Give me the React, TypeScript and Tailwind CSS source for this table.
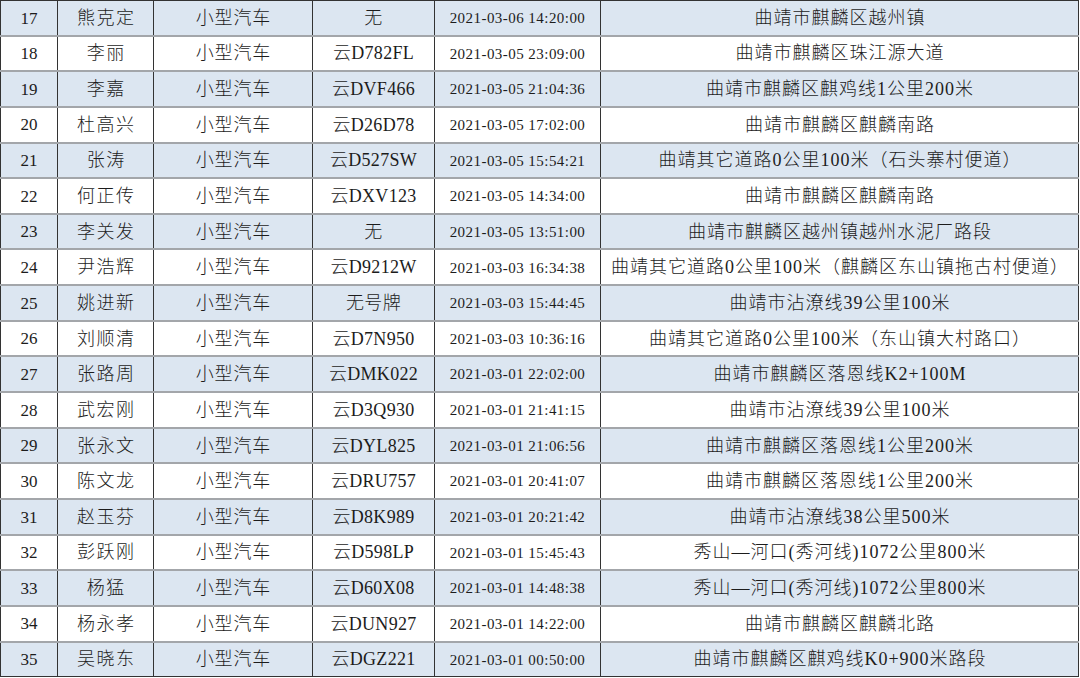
const rows: [string, string, string, string, string, string][] = [
  ['17', '熊克定', '小型汽车', '无', '2021-03-06 14:20:00', '曲靖市麒麟区越州镇'],
  ['18', '李丽', '小型汽车', '云D782FL', '2021-03-05 23:09:00', '曲靖市麒麟区珠江源大道'],
  ['19', '李嘉', '小型汽车', '云DVF466', '2021-03-05 21:04:36', '曲靖市麒麟区麒鸡线1公里200米'],
  ['20', '杜高兴', '小型汽车', '云D26D78', '2021-03-05 17:02:00', '曲靖市麒麟区麒麟南路'],
  ['21', '张涛', '小型汽车', '云D527SW', '2021-03-05 15:54:21', '曲靖其它道路0公里100米（石头寨村便道）'],
  ['22', '何正传', '小型汽车', '云DXV123', '2021-03-05 14:34:00', '曲靖市麒麟区麒麟南路'],
  ['23', '李关发', '小型汽车', '无', '2021-03-05 13:51:00', '曲靖市麒麟区越州镇越州水泥厂路段'],
  ['24', '尹浩辉', '小型汽车', '云D9212W', '2021-03-03 16:34:38', '曲靖其它道路0公里100米（麒麟区东山镇拖古村便道）'],
  ['25', '姚进新', '小型汽车', '无号牌', '2021-03-03 15:44:45', '曲靖市沾潦线39公里100米'],
  ['26', '刘顺清', '小型汽车', '云D7N950', '2021-03-03 10:36:16', '曲靖其它道路0公里100米（东山镇大村路口）'],
  ['27', '张路周', '小型汽车', '云DMK022', '2021-03-01 22:02:00', '曲靖市麒麟区落恩线K2+100M'],
  ['28', '武宏刚', '小型汽车', '云D3Q930', '2021-03-01 21:41:15', '曲靖市沾潦线39公里100米'],
  ['29', '张永文', '小型汽车', '云DYL825', '2021-03-01 21:06:56', '曲靖市麒麟区落恩线1公里200米'],
  ['30', '陈文龙', '小型汽车', '云DRU757', '2021-03-01 20:41:07', '曲靖市麒麟区落恩线1公里200米'],
  ['31', '赵玉芬', '小型汽车', '云D8K989', '2021-03-01 20:21:42', '曲靖市沾潦线38公里500米'],
  ['32', '彭跃刚', '小型汽车', '云D598LP', '2021-03-01 15:45:43', '秀山—河口(秀河线)1072公里800米'],
  ['33', '杨猛', '小型汽车', '云D60X08', '2021-03-01 14:48:38', '秀山—河口(秀河线)1072公里800米'],
  ['34', '杨永孝', '小型汽车', '云DUN927', '2021-03-01 14:22:00', '曲靖市麒麟区麒麟北路'],
  ['35', '吴晓东', '小型汽车', '云DGZ221', '2021-03-01 00:50:00', '曲靖市麒麟区麒鸡线K0+900米路段'],
]

const font = { fontFamily: '"Liberation Serif", "Noto Sans CJK SC", serif' }

export default function App() {
  return (
    <div className="h-[678px] w-[1080px] overflow-hidden bg-white text-[#1c1c1c]" style={font}>
      <div className="w-[1079px] border-t border-[#333]">
        {rows.map((r, i) => {
          const last = i === rows.length - 1
          return (
            <div
              key={r[0]}
              className={`grid grid-cols-[58px_96px_159px_122px_166px_478px] ${
                last ? 'h-[34.5px] border-b border-[#333]' : 'h-[35.65px] border-b-2 border-[#a3a6aa]'
              } ${i % 2 === 0 ? 'bg-[#dce6f1]' : 'bg-white'}`}
            >
              <div className="flex items-center justify-center border-x border-[#333] pt-px text-[17px]">{r[0]}</div>
              <div className="flex items-center justify-center border-r border-[#333] pt-px pl-[1.5px] text-[18px] font-light tracking-[1.5px]">
                {r[1]}
              </div>
              <div className="flex items-center justify-center border-r border-[#333] pt-px pl-[0.8px] text-[18px] font-light tracking-[0.8px]">
                {r[2]}
              </div>
              <div className="flex items-center justify-center border-r border-[#333] pt-px text-[18px] font-light tracking-[0.3px]">
                {r[3]}
              </div>
              <div className="flex items-center justify-center border-r border-[#333] pt-px text-[15px] tracking-[0.45px]">
                {r[4]}
              </div>
              <div className="flex items-center justify-center whitespace-nowrap border-r border-[#333] pt-px pl-px text-[18px] font-light tracking-[1px]">
                {r[5]}
              </div>
            </div>
          )
        })}
      </div>
    </div>
  )
}
